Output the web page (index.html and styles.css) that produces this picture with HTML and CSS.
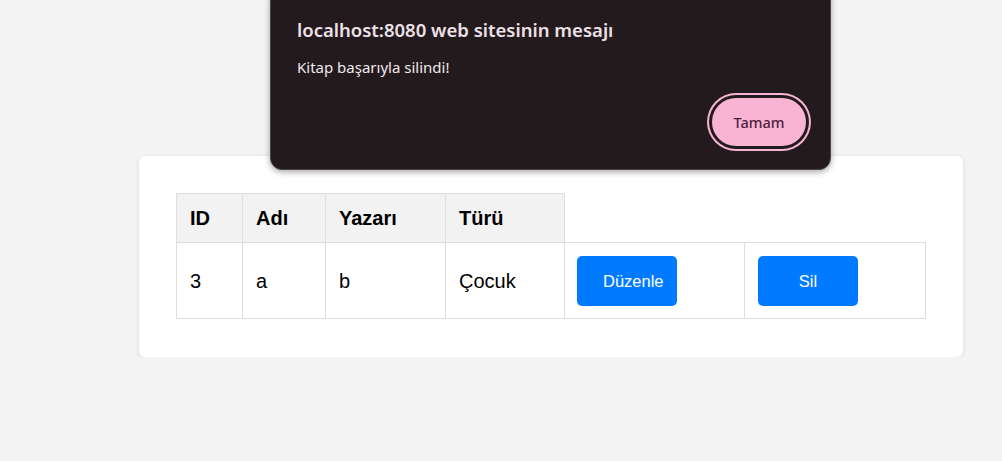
FILE: index.html
```html
<!DOCTYPE html>
<html lang="tr">
<head>
<meta charset="utf-8">
<title>Kitaplar</title>
<link rel="stylesheet" href="styles.css">
</head>
<body>
<div class="page">
  <div class="card">
    <table class="books">
      <colgroup>
        <col class="c-id"><col class="c-name"><col class="c-author"><col class="c-type"><col class="c-edit"><col class="c-del">
      </colgroup>
      <thead>
        <tr><th>ID</th><th>Adı</th><th>Yazarı</th><th>Türü</th></tr>
      </thead>
      <tbody>
        <tr>
          <td>3</td><td>a</td><td>b</td><td>Çocuk</td>
          <td class="act"><button class="btn">Düzenle</button></td>
          <td class="act act-last"><button class="btn">Sil</button></td>
        </tr>
      </tbody>
    </table>
  </div>
</div>
<div class="dialog">
  <div class="dlg-title">localhost:8080 web sitesinin mesajı</div>
  <div class="dlg-msg">Kitap başarıyla silindi!</div>
  <div class="dlg-actions"><button class="dlg-btn">Tamam</button></div>
</div>
</body>
</html>
```

FILE: styles.css
```css
html, body {
  margin: 0;
  padding: 0;
  background: #f4f4f4;
  font-family: "Liberation Sans", Arial, sans-serif;
}
.page {
  padding: 156px 0 0 139px;
}
.card {
  box-sizing: border-box;
  width: 824px;
  background: #fff;
  border-radius: 6px;
  box-shadow: 0 1px 5px rgba(0,0,0,0.12);
  padding: 37px 37px 38px;
}
.books {
  width: 749px;
  border-collapse: collapse;
  table-layout: fixed;
  font-size: 20px;
  color: #000;
}
.c-id { width: 66px; }
.c-name { width: 83px; }
.c-author { width: 120px; }
.c-type { width: 119px; }
.c-edit { width: 180px; }
.c-del { width: 181px; }
.books th, .books td {
  border: 1px solid #ddd;
  text-align: left;
  padding: 12px 13px;
  line-height: 23px;
}
.books th {
  background: #f2f2f2;
  font-weight: bold;
  padding: 13px 13px 12px;
}
.books td {
  height: 50px;
  padding: 13px 13px 12px;
}
.books td.act {
  padding-left: 12px;
}
.books td.act-last {
  padding-left: 13px;
}
.btn {
  display: block;
  width: 100px;
  height: 50px;
  border: none;
  border-radius: 5px;
  background: #007bff;
  color: #fff;
  font-family: "Liberation Sans", Arial, sans-serif;
  font-size: 16.5px;
  padding: 0 26px;
  white-space: nowrap;
}
.dialog {
  position: absolute;
  left: 270px;
  top: -12px;
  width: 561px;
  height: 182px;
  box-sizing: border-box;
  background: #231a1e;
  border: 1px solid #4a4347;
  border-radius: 12px;
  box-shadow: 0 2px 6px rgba(0,0,0,0.35);
  padding: 29px 24px 0 26px;
  font-family: "Noto Sans", "Open Sans", sans-serif;
}
.dlg-title {
  color: #ece1e6;
  font-size: 18.5px;
  font-weight: 600;
  line-height: 24px;
}
.dlg-msg {
  color: #f1e8ec;
  font-size: 15px;
  line-height: 20px;
  margin-top: 15px;
}
.dlg-actions {
  display: flex;
  justify-content: flex-end;
  margin-top: 21px;
}
.dlg-btn {
  width: 94px;
  height: 48px;
  border-radius: 24px;
  background: #f8b4d2;
  color: #4e1d3c;
  border: none;
  box-shadow: 0 0 0 3px #231a1e, 0 0 0 5px #f8b4d2;
  font-family: "Noto Sans", "Open Sans", sans-serif;
  font-size: 14.5px;
  font-weight: 500;
  padding: 0;
}
```
